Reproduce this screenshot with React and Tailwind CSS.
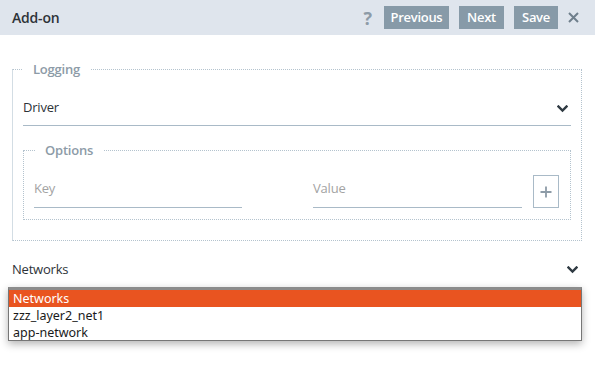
import React from "react";

function Chevron({ className }) {
  return (
    <svg className={className} width="11" height="8" viewBox="0 0 11 8" fill="none">
      <polyline points="1.5,1.5 5.5,5.5 9.5,1.5" stroke="#2f3a42" strokeWidth="2.4" strokeLinecap="square" />
    </svg>
  );
}

export default function App() {
  return (
    <div className="w-[595px] h-[370px] bg-white overflow-hidden relative" style={{ fontFamily: '"Open Sans", "Noto Sans", sans-serif' }}>
      {/* header */}
      <div className="h-[35px] bg-[#dfe5ed] flex items-center pl-[12px] pr-[16px]">
        <div className="text-[14px] font-semibold text-[#2d3338] tracking-[-0.2px]">Add-on</div>
        <div className="ml-auto flex items-center">
          <span className="text-[18px] font-bold text-[#8d9ba7] mr-[12px] leading-none">?</span>
          <button className="h-[23px] w-[65px] bg-[#879aa8] text-white text-[13px] font-semibold tracking-[-0.3px]">Previous</button>
          <button className="ml-[10px] h-[23px] w-[45px] bg-[#879aa8] text-white text-[13px] font-semibold tracking-[-0.3px]">Next</button>
          <button className="ml-[10px] h-[23px] w-[44px] bg-[#879aa8] text-white text-[13px] font-semibold tracking-[-0.3px]">Save</button>
          <svg className="ml-[10px]" width="11" height="11" viewBox="0 0 11 11">
            <path d="M1 1 L10 10 M10 1 L1 10" stroke="#6f7f8c" strokeWidth="2" />
          </svg>
        </div>
      </div>

      {/* body */}
      <div className="pl-[12px]">
        <fieldset className="mt-[24px] w-[570px] border border-dotted border-[#b4c3ce] [border-left-style:solid] [border-left-color:#d3dde4] px-[10px] pb-[20px]">
          <legend className="px-[10px] h-[20px] leading-[20px] text-[13px] font-semibold text-[#8d9ba7] tracking-[-0.2px]">Logging</legend>
          <div className="mt-[17px] h-[30px] flex items-end pb-[8px] border-b border-[#a9bac7] pr-[3px]">
            <span className="text-[13px] leading-[20px] text-[#2d3338] tracking-[-0.2px]">Driver</span>
            <Chevron className="ml-auto mb-[4px]" />
          </div>

          <fieldset className="mt-[14px] w-[548px] border border-dotted border-[#b4c3ce] pl-[10px] pb-[11px]">
            <legend className="ml-[1px] px-[10px] h-[20px] leading-[20px] text-[13px] font-semibold text-[#8d9ba7] tracking-[-0.2px]">Options</legend>
            <div className="mt-[15px] flex items-end">
              <div className="w-[208px] h-[30px] border-b border-[#a9bac7] flex items-start">
                <span className="text-[13px] leading-[20px] text-[#a3a3a3] tracking-[-0.2px]">Key</span>
              </div>
              <div className="ml-[71px] w-[209px] h-[30px] border-b border-[#a9bac7] flex items-start">
                <span className="text-[13px] leading-[20px] text-[#a3a3a3] tracking-[-0.2px]">Value</span>
              </div>
              <div className="ml-[11px] w-[26px] h-[33px] border border-[#a9bac7] flex items-center justify-center">
                <svg width="12" height="12" viewBox="0 0 12 12">
                  <path d="M6 0.5 V11.5 M0.5 6 H11.5" stroke="#8d9ba7" strokeWidth="1.8" />
                </svg>
              </div>
            </div>
          </fieldset>
        </fieldset>

        <div className="mt-[9px] w-[570px] h-[38px] flex items-start pt-[9px] border-b border-[#a9bac7] pr-[4px]">
          <span className="text-[13px] leading-[20px] text-[#2d3338] tracking-[-0.2px]">Networks</span>
          <Chevron className="ml-auto mt-[7px]" />
        </div>
      </div>

      {/* dropdown */}
      <div className="absolute left-[8px] top-[287px] w-[574px] bg-white border border-[#767676] border-t-[3px] border-t-[#8c8c8c] shadow-[0_3px_8px_rgba(0,0,0,0.3)] text-[12.5px] text-[#1a1a1a]" style={{ fontFamily: '"Noto Sans", "Open Sans", sans-serif' }}>
        <div className="h-[17px] leading-[17px] bg-[#e95420] text-white pl-[4px]">Networks</div>
        <div className="h-[17px] leading-[17px] pl-[4px]">zzz_layer2_net1</div>
        <div className="h-[16px] leading-[17px] pl-[4px]">app-network</div>
      </div>
    </div>
  );
}
